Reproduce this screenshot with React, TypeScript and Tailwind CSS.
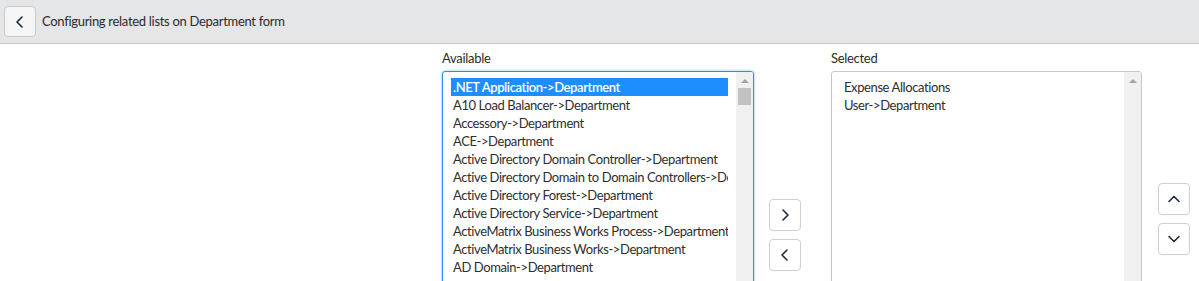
import React from "react";

const available = [
  ".NET Application->Department",
  "A10 Load Balancer->Department",
  "Accessory->Department",
  "ACE->Department",
  "Active Directory Domain Controller->Department",
  "Active Directory Domain to Domain Controllers->Department",
  "Active Directory Forest->Department",
  "Active Directory Service->Department",
  "ActiveMatrix Business Works Process->Department",
  "ActiveMatrix Business Works->Department",
  "AD Domain->Department",
];

const selected = ["Expense Allocations", "User->Department"];

function Chevron({ dir }: { dir: "left" | "right" | "up" | "down" }) {
  const d =
    dir === "left"
      ? "M9 2 L4 7 L9 12"
      : dir === "right"
      ? "M5 2 L10 7 L5 12"
      : dir === "up"
      ? "M2 9.5 L7 4.5 L12 9.5"
      : "M2 4.5 L7 9.5 L12 4.5";
  return (
    <svg width="14" height="14" viewBox="0 0 14 14" fill="none">
      <path d={d} stroke="#1f2a37" strokeWidth="1.6" strokeLinecap="round" strokeLinejoin="round" />
    </svg>
  );
}

function SquareButton({ dir }: { dir: "left" | "right" | "up" | "down" }) {
  return (
    <button
      type="button"
      className="w-[32px] h-[32px] bg-white border border-[#cfcfcf] rounded-[4px] flex items-center justify-center"
    >
      <Chevron dir={dir} />
    </button>
  );
}

function ScrollTrack({ thumb }: { thumb: boolean }) {
  return (
    <div className="w-[17px] bg-[#f0f0f0] flex flex-col items-center pt-[7px]">
      <div className="w-0 h-0 border-l-[4px] border-r-[4px] border-b-[4px] border-l-transparent border-r-transparent border-b-[#a3a3a3]" />
      {thumb && <div className="mt-[5px] w-[13px] h-[17px] bg-[#c1c1c1]" />}
    </div>
  );
}

export default function App() {
  return (
    <div
      className="w-[1199px] h-[281px] overflow-hidden bg-white text-[#2e2e2e]"
      style={{ fontFamily: "Lato, 'Noto Sans', sans-serif" }}
    >
      <div className="h-[44px] bg-[#e5e6e8] border-b border-[#c6c6c6] flex items-center pl-[4px]">
        <button
          type="button"
          className="w-[32px] h-[31px] bg-[#f5f5f6] border border-[#c9c9c9] rounded-[4px] flex items-center justify-center"
        >
          <Chevron dir="left" />
        </button>
        <span className="ml-[6px] text-[13px] tracking-[-0.3px] text-[#2b2b2b]">
          Configuring related lists on Department form
        </span>
      </div>

      <div className="flex pt-[6px]">
        <div className="w-[442px] shrink-0" />

        <div className="w-[312px] shrink-0">
          <div className="h-[21px] text-[13px] tracking-[-0.3px] leading-[16px] text-[#2b2b2b]">Available</div>
          <div className="h-[330px] flex border border-[#2d8cf0] rounded-[3px] shadow-[0_0_3px_#7fb8f5] overflow-hidden">
            <div className="flex-1 min-w-0 pl-[8px] pt-[6px] pr-[8px] overflow-hidden">
              {available.map((item, i) => (
                <div
                  key={item}
                  className={`h-[18px] leading-[18px] px-[2px] text-[13px] tracking-[-0.4px] whitespace-nowrap overflow-hidden ${
                    i === 0 ? "bg-[#1e8eff] text-white font-semibold" : ""
                  }`}
                >
                  {item}
                </div>
              ))}
            </div>
            <ScrollTrack thumb />
          </div>
        </div>

        <div className="ml-[15px] mt-[149px] flex flex-col gap-[8px]">
          <SquareButton dir="right" />
          <SquareButton dir="left" />
        </div>

        <div className="ml-[30px] w-[311px] shrink-0">
          <div className="h-[21px] text-[13px] tracking-[-0.3px] leading-[16px] text-[#2b2b2b]">Selected</div>
          <div className="h-[330px] flex border border-[#c6c6c6] rounded-[3px] overflow-hidden">
            <div className="flex-1 pl-[10px] pt-[6px]">
              {selected.map((item) => (
                <div
                  key={item}
                  className="h-[18px] leading-[18px] px-[2px] text-[13px] tracking-[-0.4px] whitespace-nowrap"
                >
                  {item}
                </div>
              ))}
            </div>
            <ScrollTrack thumb={false} />
          </div>
        </div>

        <div className="ml-[16px] mt-[133px] flex flex-col gap-[8px]">
          <SquareButton dir="up" />
          <SquareButton dir="down" />
        </div>
      </div>
    </div>
  );
}
